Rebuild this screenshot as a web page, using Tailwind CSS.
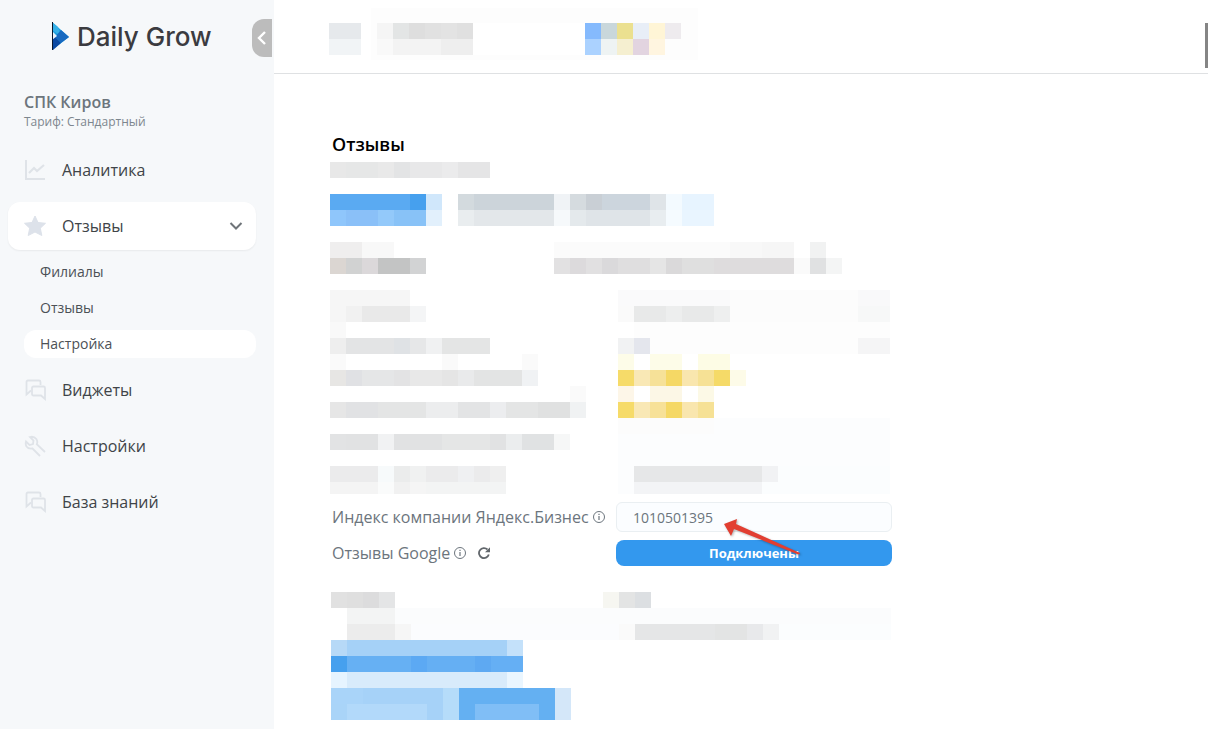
<!DOCTYPE html>
<html lang="ru">
<head>
    <meta charset="UTF-8">
    <meta name="viewport" content="width=device-width, initial-scale=1.0">
    <title>Daily Grow - Настройка отзывов</title>
    <script src="https://cdn.jsdelivr.net/npm/@tailwindcss/browser@4"></script>
</head>
<body class="min-h-screen flex bg-white overflow-hidden font-['Open_Sans','Noto_Sans',sans-serif]">
    <!-- Sidebar -->
    <aside class="relative w-[274px] shrink-0 min-h-screen bg-[#f6f8fa] pl-2 pr-[18px]">
        <a href="#" class="flex items-center gap-2 h-[72px] pl-11 font-['Inter',sans-serif] text-[26px] font-medium text-[#3b3b40]">
            <svg class="w-[17px] h-7" viewBox="0 0 17 28">
                <path d="M0 0L17 15L0 28Z" fill="#1a9fe0"/>
                <path d="M0 0L6 5L9 14L0 8Z" fill="#35b0e8"/>
                <path d="M9 8L17 15L9 21L3 15Z" fill="#1769c0"/>
                <path d="M0 17L3 15L9 21L1 28H0Z" fill="#0b49a3"/>
                <path d="M0 9L5 14L0 18Z" fill="#e9f4fc"/>
                <path d="M0 0H1V28H0Z" fill="#07172f"/>
            </svg>
            Daily Grow
        </a>
        <button type="button" aria-label="Свернуть меню" class="absolute top-[19px] right-0.5 w-5 h-[38px] rounded-l-xl bg-[#bcbcbc] flex items-center justify-center">
            <svg class="w-2.5 h-3.5" viewBox="0 0 10 14" fill="none" stroke="#fff" stroke-width="2.4"><path d="M8 1L2 7L8 13"/></svg>
        </button>

        <div class="pl-4 pt-5 h-[74px]">
            <p class="text-base leading-5 font-semibold text-[#6c757d]">СПК Киров</p>
            <p class="text-xs leading-5 text-[#7d868e]">Тариф: Стандартный</p>
        </div>

        <nav class="flex flex-col gap-2 text-base text-[#404448]">
            <a href="#" class="flex items-center h-12 pl-4 gap-4">
                <svg class="w-[22px] h-[22px]" viewBox="0 0 22 22" fill="none" stroke="#dfe3e8" stroke-width="2"><path d="M2 1V20H21"/><path d="M5 14L10 9L13 12L20 6" stroke-width="2.2"/></svg>
                Аналитика
            </a>
            <a href="#" class="flex items-center h-12 pl-4 pr-3 gap-4 rounded-xl bg-white shadow-[0_1px_2px_rgba(0,0,0,0.06)]">
                <svg class="w-[22px] h-[22px]" viewBox="0 0 22 22" fill="#dde2ea" stroke="#dde2ea" stroke-linejoin="round"><path d="M11 1L14 7.5L21.5 8.3L16.3 13.2L17.8 20.5L11 17L4.200 20.500L5.700 13.200L.5 8.300L8 7.500Z"/></svg>
                Отзывы
                <svg class="ml-auto w-4 h-4" viewBox="0 0 16 16" fill="none" stroke="#6f7479" stroke-width="2"><path d="M2.500 5L8 10.500L13.500 5"/></svg>
            </a>
            <div class="flex flex-col gap-2 pl-4 text-sm text-[#4c5156]">
                <a href="#" class="flex items-center h-7 pl-4">Филиалы</a>
                <a href="#" class="flex items-center h-7 pl-4">Отзывы</a>
                <a href="#" class="flex items-center h-7 pl-4 rounded-xl bg-white">Настройка</a>
            </div>
            <a href="#" class="flex items-center h-12 pl-4 gap-4">
                <svg class="w-[22px] h-[22px]" viewBox="0 0 22 22" fill="none" stroke="#dfe3e8" stroke-width="1.800"><path d="M7 11.500L2.500 15.500V3Q2.500 1.500 4 1.500H15Q16.500 1.500 16.500 3V6"/><path d="M9.500 7.500H19.500Q21 7.500 21 9V20L17 16.500H9.500Q8 16.500 8 15V9Q8 7.500 9.500 7.500Z"/></svg>
                Виджеты
            </a>
            <a href="#" class="flex items-center h-12 pl-4 gap-4">
                <svg class="w-[22px] h-[22px]" viewBox="0 0 22 22" fill="none" stroke="#dfe3e8" stroke-width="1.800"><path d="M16 21L8.500 13.500Q4.500 14.200 2.500 11.500Q1.200 9.200 2 6.500L5.500 10L9 9L9.500 5.500L6 2Q10 1 12.300 4Q14 6.500 12.800 9.200L21 17"/></svg>
                Настройки
            </a>
            <a href="#" class="flex items-center h-12 pl-4 gap-4">
                <svg class="w-[22px] h-[22px]" viewBox="0 0 22 22" fill="none" stroke="#dfe3e8" stroke-width="1.800"><path d="M7 11.500L2.500 15.500V3Q2.500 1.500 4 1.500H15Q16.500 1.500 16.500 3V6"/><path d="M9.500 7.500H19.500Q21 7.500 21 9V20L17 16.500H9.500Q8 16.500 8 15V9Q8 7.500 9.500 7.500Z"/></svg>
                База знаний
            </a>
        </nav>
    </aside>

    <div class="flex-1 min-w-0">
        <header class="h-[74px] border-b border-[#dfe1e3] pl-[55px] pt-2">
            <svg id="headerMosaic" class="block w-[369px] h-[52px]" viewBox="0 -15 369 52" shape-rendering="crispEdges"></svg>
        </header>

        <main class="pl-14 pt-14">
            <h1 class="pl-0.5 text-lg leading-7 font-semibold text-black">Отзывы</h1>
            <svg id="formMosaic" class="block mt-1 w-[576px] h-[332px]" viewBox="0 0 576 332" shape-rendering="crispEdges"></svg>

            <form class="grid grid-cols-[284px_276px] gap-y-2 items-center pl-0.5 mt-2 text-base text-[#6c757d]">
                <label for="yandexIndex" class="flex items-center gap-1 whitespace-nowrap">
                    Индекс компании Яндекс.Бизнес
                    <svg class="w-3 h-3" viewBox="0 0 12 12" fill="none" stroke="#6c757d"><circle cx="6" cy="6" r="5.500"/><path d="M6 5V9M6 2.800V4" stroke-width="1.200"/></svg>
                </label>
                <div class="relative">
                    <input id="yandexIndex" type="text" value="1010501395" class="block w-full h-[30px] px-4 rounded-md border border-[#eaeff2] bg-[#fbfdff] text-sm text-[#6c757d] outline-none">
                    <svg class="absolute left-[107px] top-[15px] w-20 h-10 pointer-events-none drop-shadow-[1px_1px_1px_rgba(0,0,0,0.3)]" viewBox="0 0 80 40">
                        <path d="M1 7L14 2L13 7L77 36Q77 38 74 37L11 12L8 19Z" fill="#e23e31"/>
                    </svg>
                </div>
                <div class="flex items-center gap-1">
                    <label for="googleReviews">Отзывы Google</label>
                    <svg class="w-3 h-3" viewBox="0 0 12 12" fill="none" stroke="#6c757d"><circle cx="6" cy="6" r="5.500"/><path d="M6 5V9M6 2.800V4" stroke-width="1.200"/></svg>
                    <button type="button" aria-label="Обновить" class="ml-2">
                        <svg class="w-3 h-3" viewBox="0 0 12 12" fill="none" stroke="#62676c" stroke-width="1.800"><path d="M10.800 7.500A5 5 0 1 1 9.500 2.500"/><path d="M12 .2V5.200H7Z" fill="#62676c" stroke="none"/></svg>
                    </button>
                </div>
                <button id="googleReviews" type="button" class="h-[26px] rounded-lg bg-[#3398ee] text-[13px] leading-5 font-bold text-white">Подключены</button>
            </form>

            <svg id="listMosaic" class="block ml-px mt-[26px] w-[576px] h-32" viewBox="0 0 576 128" shape-rendering="crispEdges"></svg>
        </main>
    </div>
    <div class="fixed right-0 top-[23px] w-[3px] h-[45px] bg-[#858585]"></div>

    <script>
        // row: [row number, [column, width, colour], ...], one cell is 16x16
        const headerRows = [
            [0, [0, 2, '#e6e9ec'], [3, 1, '#f5f5f5'], [4, 1, '#e3e5e5'], [5, 1, '#dedede'], [6, 1, '#e1e1e1'], [7, 1, '#e3e3e3'], [8, 1, '#e0e0e0'], [16, 1, '#85bafd'], [17, 1, '#c9d7db'], [18, 1, '#ebe090'], [19, 1, '#e8eef7'], [20, 1, '#fff5d6'], [21, 1, '#eeebee']],
            [1, [0, 2, '#f1f4f6'], [3, 1, '#f9f9f9'], [4, 3, '#f3f3f3'], [7, 2, '#eeeeee'], [16, 1, '#abd2ff'], [17, 1, '#eef3f3'], [18, 1, '#f5efd0'], [19, 1, '#e2d4e0'], [20, 1, '#fff5e0']]
        ];

        const formRows = [
            [0, [0, 1, '#e8e8e8'], [1, 2, '#e6e7e7'], [3, 1, '#e9e9e9'], [4, 1, '#e3e4e5'], [5, 2, '#e8e8e9'], [7, 1, '#ebebec'], [8, 2, '#e5e5e6']],
            [2, [0, 5, '#5aaaf2'], [5, 1, '#46a0ee'], [6, 1, '#d0e7fb'], [8, 1, '#d3dade'], [9, 5, '#ccd4da'], [14, 1, '#f0f3f6'], [15, 1, '#d5dbdf'], [16, 1, '#c9cfd5'], [17, 3, '#ccd5dd'], [20, 1, '#dfe4e8'], [21, 1, '#f3faff'], [22, 2, '#e7f4ff']],
            [3, [0, 1, '#8fc6fb'], [1, 2, '#8ac0f8'], [3, 1, '#93c9fa'], [4, 2, '#88c2f7'], [6, 1, '#e2f0fc'], [8, 1, '#e9edef'], [9, 5, '#e3e7ea'], [14, 1, '#f6f9fb'], [15, 1, '#e4e9ec'], [16, 4, '#dfe4e8'], [20, 1, '#e8edf0'], [21, 1, '#f5fbff'], [22, 2, '#e9f5ff']],
            [5, [0, 2, '#efeeee'], [2, 2, '#f8f8f8'], [14, 11, '#fbfbfb'], [25, 2, '#f8f8f8'], [27, 2, '#f6f6f6'], [30, 1, '#f1f2f2']],
            [6, [0, 1, '#dbd6d2'], [1, 1, '#d1d2d2'], [2, 1, '#dbd8da'], [3, 2, '#c3c4c4'], [5, 1, '#d2d3d4'], [14, 1, '#e2e1e2'], [15, 1, '#dcdadc'], [16, 1, '#e1e0e1'], [17, 1, '#dad9db'], [18, 2, '#dfdedf'], [20, 1, '#e5e5e5'], [21, 1, '#dad9da'], [22, 2, '#dfdfdf'], [24, 5, '#dedcdd'], [29, 1, '#fafafa'], [30, 1, '#e0e1e2'], [31, 1, '#f4f5f5']],
            [8, [0, 5, '#f6f6f6'], [18, 7, '#fafafb'], [25, 8, '#fcfcfc'], [33, 2, '#f9f9fa']],
            [9, [0, 1, '#f6f6f6'], [1, 1, '#f1f1f1'], [2, 3, '#e9e9e9'], [5, 1, '#f4f5f6'], [18, 1, '#fafafa'], [19, 2, '#e8e9e9'], [21, 1, '#edeeee'], [22, 2, '#e8e9e9'], [24, 1, '#eeefef'], [25, 8, '#fcfcfc'], [33, 2, '#f7f8f8']],
            [10, [0, 1, '#f9f9f9'], [19, 16, '#fdfdfd']],
            [11, [0, 1, '#eeeeee'], [1, 3, '#e3e4e5'], [4, 1, '#dfe2e5'], [5, 1, '#e6e7e8'], [6, 1, '#f0f1f2'], [7, 3, '#e4e5e5'], [18, 1, '#f1f2f3'], [19, 1, '#e4e6ed'], [20, 13, '#fdfdfd'], [33, 2, '#f5f5f6']],
            [12, [0, 1, '#fafafa'], [7, 1, '#fafafa'], [12, 1, '#fafafa'], [18, 1, '#fdfce8'], [20, 2, '#fdfce8'], [23, 2, '#fdfce5']],
            [13, [0, 1, '#e7e6e4'], [1, 1, '#e0e1e4'], [2, 2, '#e5e6e7'], [4, 1, '#e3e3e4'], [5, 2, '#e8e8e8'], [7, 1, '#e5e5e5'], [8, 1, '#e9eaeb'], [9, 3, '#e3e4e4'], [12, 1, '#f0f2f4'], [18, 1, '#f6db69'], [19, 1, '#f9e8b5'], [20, 1, '#f6e198'], [21, 1, '#f5d865'], [22, 1, '#f9e6ae'], [23, 1, '#f6e195'], [24, 1, '#f5da68'], [25, 1, '#fdfbe8']],
            [14, [15, 1, '#fafafa'], [18, 1, '#fdf6e8'], [20, 2, '#fcf7e6'], [23, 1, '#fcf9e6']],
            [15, [0, 1, '#e6e6e6'], [1, 2, '#e1e2e4'], [3, 3, '#e4e5e5'], [6, 2, '#ecedee'], [8, 2, '#e3e4e5'], [10, 1, '#ecedef'], [11, 2, '#e4e5e5'], [13, 2, '#e0e1e1'], [15, 1, '#f0f2f3'], [18, 1, '#f6db69'], [19, 1, '#f9e8b5'], [20, 1, '#f7e198'], [21, 1, '#f5d865'], [22, 1, '#f9e6ae'], [23, 1, '#f6e195']],
            [16, [18, 6, '#fcfcfc'], [24, 11, '#fcfdfe']],
            [17, [0, 1, '#e2e3e4'], [1, 2, '#e1e2e3'], [3, 1, '#f1f2f3'], [4, 3, '#e1e2e3'], [7, 3, '#e5e6e6'], [10, 1, '#e1e2e3'], [11, 1, '#ebedee'], [12, 2, '#e0e2e3'], [14, 1, '#f6f7f7'], [18, 17, '#fcfdfe']],
            [18, [18, 17, '#fcfdfe']],
            [19, [0, 3, '#ebebec'], [3, 1, '#f7fafb'], [4, 1, '#ebecec'], [5, 1, '#f0f1f1'], [6, 2, '#ebebec'], [8, 1, '#eff0f2'], [9, 1, '#ebebec'], [10, 1, '#efefef'], [18, 1, '#fcfdfe'], [19, 8, '#e6e7e8'], [27, 1, '#f1f2f4'], [28, 7, '#fbfdfe']],
            [20, [0, 3, '#f4f4f4'], [3, 1, '#fafbfb'], [4, 1, '#f1f1f1'], [5, 1, '#f5f5f5'], [6, 5, '#f3f4f4'], [18, 1, '#fcfdfe'], [19, 8, '#f3f4f6'], [27, 8, '#fbfdfe']]
        ];

        const listRows = [
            [0, [0, 1, '#e1e1e1'], [1, 1, '#dfdfdf'], [2, 1, '#dcdcdd'], [3, 1, '#e4e5e6'], [17, 1, '#f6f6f1'], [18, 1, '#e3e4e4'], [19, 1, '#dcdfe2']],
            [1, [1, 3, '#f3f4f4'], [4, 31, '#fbfcfd']],
            [2, [1, 3, '#ececec'], [4, 1, '#f6f6f6'], [5, 13, '#fbfcfe'], [18, 1, '#fafafa'], [19, 5, '#e5e6e7'], [24, 2, '#e3e4e4'], [26, 1, '#e8e9eb'], [27, 1, '#f1f2f3'], [28, 7, '#fbfdfe']],
            [3, [0, 1, '#b6d9f7'], [1, 10, '#a5d1f7'], [11, 1, '#c4e1fa']],
            [4, [0, 1, '#46a0ee'], [1, 4, '#66b0f3'], [5, 1, '#5ca9f3'], [6, 3, '#65aff3'], [9, 1, '#5ea9f2'], [10, 2, '#65aff4']],
            [5, [0, 1, '#e6f4ff'], [1, 10, '#d8ebfb'], [11, 1, '#eaf6ff']],
            [6, [0, 2, '#a9d4f9'], [2, 5, '#a6d2f8'], [7, 1, '#b5dcfa'], [8, 6, '#64b0f2'], [14, 1, '#d4e7f9']],
            [7, [0, 1, '#a9d4f8'], [1, 5, '#b2d9fa'], [6, 1, '#a6d2f8'], [7, 1, '#b5dcfa'], [8, 1, '#64b0f2'], [9, 4, '#80bef6'], [13, 1, '#64b0f2'], [14, 1, '#d4e7f9']]
        ];

        function addRect(svg, x, y, w, h, fill) {
            const rect = document.createElementNS('http://www.w3.org/2000/svg', 'rect');
            rect.setAttribute('x', x);
            rect.setAttribute('y', y);
            rect.setAttribute('width', w);
            rect.setAttribute('height', h);
            rect.setAttribute('fill', fill);
            svg.appendChild(rect);
        }

        function drawMosaic(id, rows) {
            const svg = document.getElementById(id);
            rows.forEach(([row, ...cells]) => {
                cells.forEach(([col, width, fill]) => addRect(svg, col * 16, row * 16, width * 16, 16, fill));
            });
        }

        addRect(document.getElementById('headerMosaic'), 42, -15, 327, 52, '#fdfdfd');
        addRect(document.getElementById('headerMosaic'), 144, 0, 112, 32, '#ffffff');
        drawMosaic('headerMosaic', headerRows);
        drawMosaic('formMosaic', formRows);
        drawMosaic('listMosaic', listRows);
    </script>
</body>
</html>
